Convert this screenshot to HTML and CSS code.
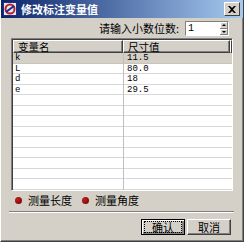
FILE: index.html
```html
<!DOCTYPE html>
<html lang="zh-CN">
<head>
    <meta charset="UTF-8">
    <title>修改标注变量值</title>
    <link rel="stylesheet" href="styles.css">
</head>
<body>

<div class="window">
    <div class="titlebar">
        <span class="app-icon">
            <svg width="14" height="14" viewBox="0 0 14 14">
                <rect x="0.5" y="0.5" width="13" height="13" fill="#e8e8f0" stroke="#203080"/>
                <circle cx="7" cy="7" r="4.5" fill="none" stroke="#c02020" stroke-width="2"/>
                <path d="M3 10 L11 4" stroke="#1030a0" stroke-width="2"/>
            </svg>
        </span>
        <span class="title">修改标注变量值</span>
        <span class="close-btn">
            <svg width="8" height="7" viewBox="0 0 8 7">
                <path d="M0 0 L2 0 L4 2 L6 0 L8 0 L5 3.5 L8 7 L6 7 L4 5 L2 7 L0 7 L3 3.5 Z" fill="#000"/>
            </svg>
        </span>
    </div>

    <div class="content">
        <div class="decimal-row">
            <label for="digits">请输入小数位数:</label>
            <div class="spin">
                <input type="text" id="digits" value="1">
                <div class="spin-btns">
                    <span class="spin-btn"><i class="arrow up"></i></span>
                    <span class="spin-btn"><i class="arrow down"></i></span>
                </div>
            </div>
        </div>

        <div class="grid">
            <div class="grid-head">
                <div class="hcell col-name">变量名</div>
                <div class="hcell col-val">尺寸值</div>
                <div class="hcell col-rest"></div>
            </div>
            <div class="grid-body">
                <div class="row selected"><span class="col-name">k</span><span class="col-val">11.5</span></div>
                <div class="row"><span class="col-name">L</span><span class="col-val">80.0</span></div>
                <div class="row"><span class="col-name">d</span><span class="col-val">18</span></div>
                <div class="row"><span class="col-name">e</span><span class="col-val">29.5</span></div>
                <div class="row"><span class="col-name"></span><span class="col-val"></span></div>
                <div class="row"><span class="col-name"></span><span class="col-val"></span></div>
                <div class="row"><span class="col-name"></span><span class="col-val"></span></div>
                <div class="row"><span class="col-name"></span><span class="col-val"></span></div>
                <div class="row"><span class="col-name"></span><span class="col-val"></span></div>
                <div class="row"><span class="col-name"></span><span class="col-val"></span></div>
                <div class="row"><span class="col-name"></span><span class="col-val"></span></div>
                <div class="row"><span class="col-name"></span><span class="col-val"></span></div>
                <div class="row"><span class="col-name"></span><span class="col-val"></span></div>
            </div>
        </div>

        <div class="options">
            <span class="opt"><i class="dot"></i>测量长度</span>
            <span class="opt"><i class="dot"></i>测量角度</span>
        </div>

        <div class="separator"></div>

        <div class="buttons">
            <button class="btn default"><span>确认</span></button>
            <button class="btn">取消</button>
        </div>
    </div>
</div>

</body>
</html>
```

FILE: styles.css
```css
body {
    margin: 0;
    background-color: #d4d0c8;
    font-family: "Noto Sans CJK SC", "Liberation Sans", sans-serif;
    font-size: 11px;
}

.window {
    width: 244px;
    height: 242px;
    box-sizing: border-box;
    background-color: #d4d0c8;
    border-left: 1px solid #ffffff;
    border-right: 1px solid #404040;
    border-bottom: 1px solid #404040;
    box-shadow: inset -1px -1px 0 #808080;
    display: flex;
    flex-direction: column;
}

.titlebar {
    height: 18px;
    background: linear-gradient(to right, #0a246a, #a6caf0);
    display: flex;
    align-items: center;
    padding: 0 3px 0 2px;
    color: #fff;
}

.app-icon {
    width: 14px;
    height: 14px;
    margin-right: 4px;
    display: flex;
}

.title {
    font-weight: bold;
    font-size: 11px;
    line-height: 14px;
    flex: 1;
}

.close-btn {
    width: 14px;
    height: 12px;
    background-color: #d4d0c8;
    border-top: 1px solid #fff;
    border-left: 1px solid #fff;
    border-right: 1px solid #404040;
    border-bottom: 1px solid #404040;
    display: flex;
    align-items: center;
    justify-content: center;
}

.content {
    flex: 1;
    display: flex;
    flex-direction: column;
    padding: 3px 9px 0 10px;
}

.decimal-row {
    display: flex;
    justify-content: flex-end;
    align-items: center;
    height: 15px;
    padding-right: 5px;
}

.decimal-row label {
    margin-right: 6px;
    line-height: 13px;
    color: #000;
}

.spin {
    display: flex;
    width: 44px;
    height: 15px;
    box-sizing: border-box;
    border-top: 1px solid #808080;
    border-left: 1px solid #808080;
    border-right: 1px solid #fff;
    border-bottom: 1px solid #fff;
    background-color: #fff;
}

.spin input {
    width: 32px;
    border: none;
    padding: 0 0 0 2px;
    font-family: "Liberation Mono", monospace;
    font-size: 10px;
    line-height: 11px;
    outline: none;
}

.spin-btns {
    display: flex;
    flex-direction: column;
    width: 10px;
}

.spin-btn {
    flex: 1;
    background-color: #d4d0c8;
    box-shadow: inset -1px -1px 0 #808080, inset 1px 1px 0 #fff;
    display: flex;
    align-items: center;
    justify-content: center;
}

.arrow {
    width: 0;
    height: 0;
    border-left: 2px solid transparent;
    border-right: 2px solid transparent;
}

.arrow.up {
    border-bottom: 2px solid #000;
}

.arrow.down {
    border-top: 2px solid #000;
}

.grid {
    margin-top: 2px;
    width: 222px;
    height: 153px;
    box-sizing: border-box;
    border-top: 1px solid #808080;
    border-left: 1px solid #808080;
    border-right: 1px solid #fff;
    border-bottom: 1px solid #fff;
    box-shadow: inset 1px 1px 0 #404040;
    background-color: #fff;
    overflow: hidden;
    padding: 1px 0 0 1px;
}

.grid-head {
    display: flex;
    height: 13px;
}

.hcell {
    box-sizing: border-box;
    background-color: #d4d0c8;
    border-top: 1px solid #fff;
    border-left: 1px solid #fff;
    border-right: 1px solid #404040;
    border-bottom: 1px solid #404040;
    box-shadow: inset -1px -1px 0 #808080;
    font-size: 10.5px;
    line-height: 11px;
    padding-left: 4px;
    color: #000;
}

.grid-head .col-name {
    width: 111px;
}

.grid-head .col-val {
    width: 108px;
}

.grid-head .col-rest {
    flex: 1;
    padding: 0;
}

.row {
    display: flex;
    height: 10.5px;
    background: linear-gradient(to top, #d8d8d8 1px, transparent 1px);
    font-family: "Liberation Mono", "Courier New", monospace;
    font-size: 9px;
    line-height: 10.5px;
}

.row.selected {
    background: linear-gradient(to top, #c8c4bc 1px, #d4d0c8 1px);
}

.row .col-name {
    width: 111px;
    padding-left: 2px;
    box-sizing: border-box;
    border-right: 1px solid #c0c0c0;
}

.row .col-val {
    padding-left: 3px;
    flex: 1;
}

.options {
    display: flex;
    align-items: center;
    height: 13px;
    margin-top: 3px;
    gap: 10px;
    padding-left: 4px;
}

.opt {
    display: flex;
    align-items: center;
    line-height: 13px;
}

.dot {
    width: 7px;
    height: 7px;
    border-radius: 50%;
    background: radial-gradient(circle at 35% 35%, #c02020, #700000);
    margin-right: 6px;
}

.separator {
    margin-top: 4px;
    margin-left: -2px;
    width: 225px;
    height: 0;
    border-top: 1px solid #808080;
    border-bottom: 1px solid #fff;
}

.buttons {
    display: flex;
    justify-content: flex-end;
    gap: 2px;
    margin-top: 6px;
    padding-right: 3px;
}

.btn {
    width: 44px;
    height: 16px;
    padding: 0;
    box-sizing: border-box;
    background-color: #d4d0c8;
    border-top: 1px solid #fff;
    border-left: 1px solid #fff;
    border-right: 1px solid #404040;
    border-bottom: 1px solid #404040;
    box-shadow: inset -1px -1px 0 #808080;
    font-family: "Noto Sans CJK SC", sans-serif;
    font-size: 11px;
    line-height: 12px;
    color: #000;
}

.btn.default {
    border: 1px solid #000;
    box-shadow: inset 1px 1px 0 #fff, inset -2px -2px 0 #808080;
}

.btn.default span {
    display: block;
    margin: 1px 2px;
    border: 1px dotted #000;
    line-height: 10px;
    height: 10px;
}
```
